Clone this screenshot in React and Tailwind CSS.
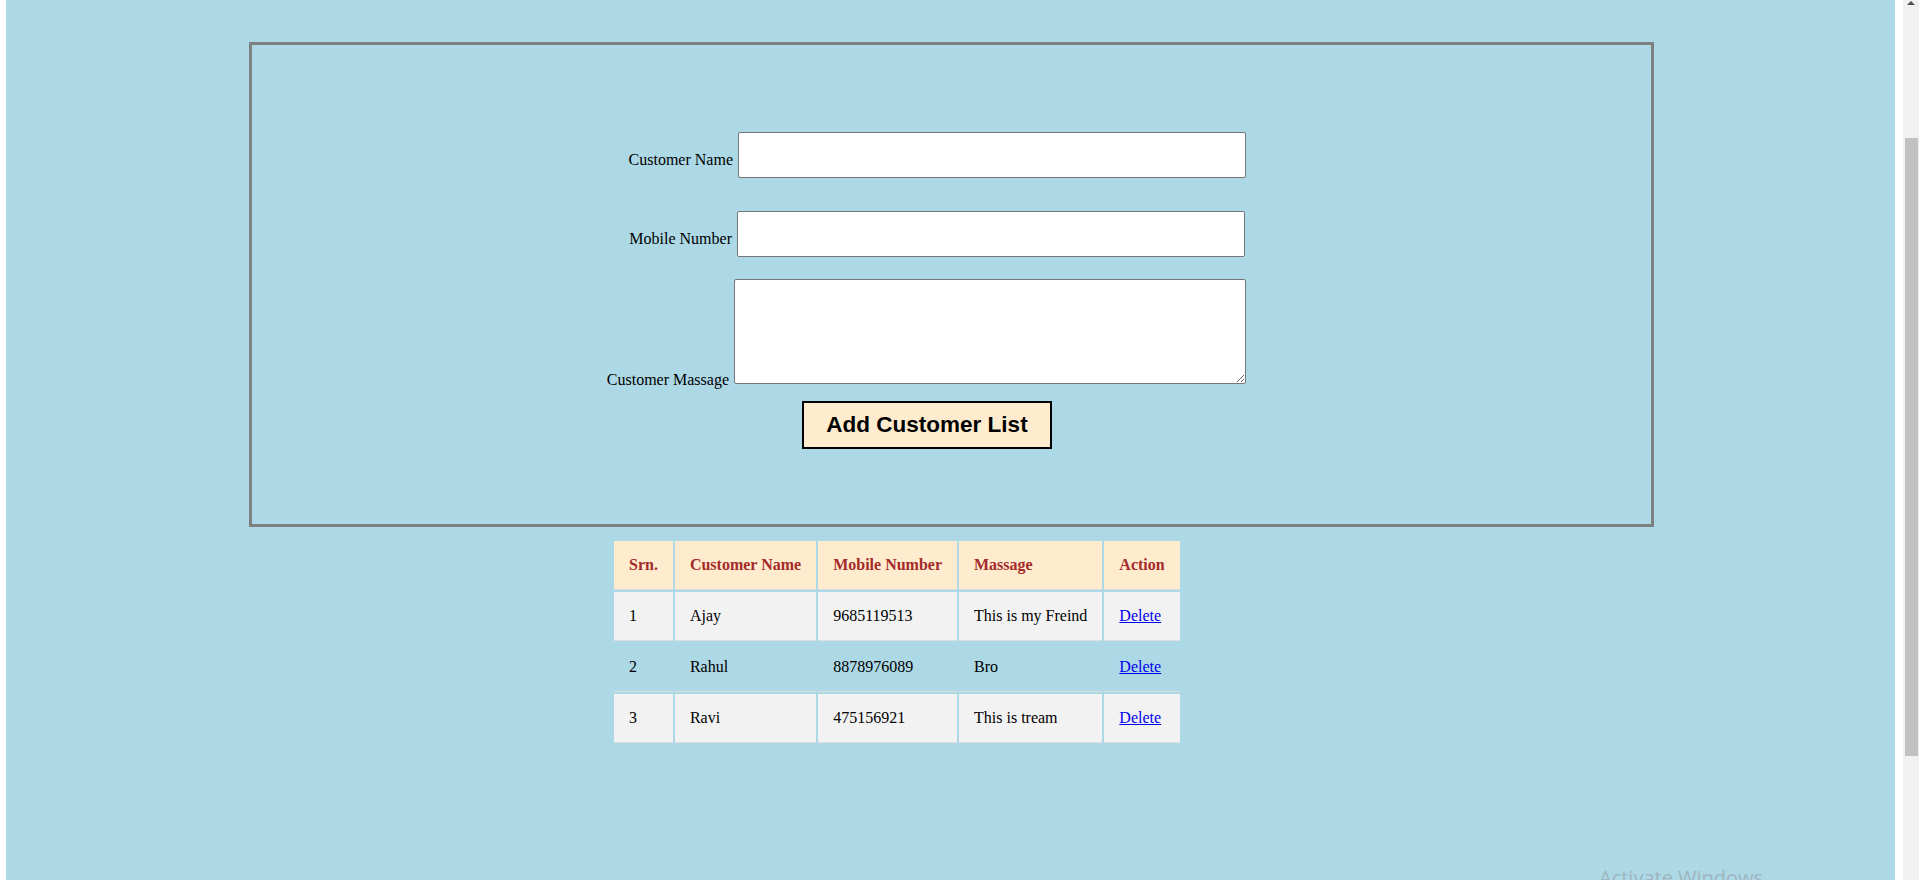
import React from 'react';

const customers = [
  { srn: 1, name: 'Ajay', mobile: '9685119513', massage: 'This is my Freind' },
  { srn: 2, name: 'Rahul', mobile: '8878976089', massage: 'Bro' },
  { srn: 3, name: 'Ravi', mobile: '475156921', massage: 'This is tream' },
];

const cell = 'px-[15px] py-[15px] leading-[18px] border-b border-[#dddddd] text-left whitespace-nowrap';

const App = () => {
  return (
    <div className="relative flex h-[880px] w-full overflow-hidden bg-white font-['Liberation_Serif','Times_New_Roman',serif] text-[16px] text-black">
      <div className="w-[6px] shrink-0 bg-white"></div>

      {/* Page */}
      <div className="w-[1889px] shrink-0 bg-[#add8e6]">
        {/* Form box */}
        <div className="ml-[243px] mt-[42px] h-[485px] w-[1405px] border-[3px] border-[#808080]">
          <div className="mt-[87px] flex items-end">
            <label className="mb-[9px] w-[481px] text-right leading-[18px]">Customer Name</label>
            <input type="text" className="ml-[5px] h-[46px] w-[508px] rounded-[2px] border border-[#767676] bg-white" />
          </div>

          <div className="mt-[33px] flex items-end">
            <label className="mb-[9px] w-[480px] text-right leading-[18px]">Mobile Number</label>
            <input type="text" className="ml-[5px] h-[46px] w-[508px] rounded-[2px] border border-[#767676] bg-white" />
          </div>

          <div className="mt-[22px] flex items-end">
            <label className="-mb-[5px] w-[477px] text-right leading-[18px]">Customer Massage</label>
            <textarea className="ml-[5px] h-[105px] w-[512px] rounded-[2px] border border-[#767676] bg-white"></textarea>
          </div>

          <button className="ml-[550px] mt-[17px] flex h-[48px] w-[250px] items-center justify-center border-2 border-black bg-[#ffebcd] font-['Liberation_Sans',Arial,sans-serif] text-[22.5px] font-bold leading-[24px] text-black">
            Add Customer List
          </button>
        </div>

        {/* Customer table */}
        <table className="ml-[606px] mt-[12px] border-separate border-spacing-[2px]">
          <thead>
            <tr className="bg-[#ffebcd] text-[#a52a2a]">
              <th className={`${cell} font-bold`}>Srn.</th>
              <th className={`${cell} font-bold`}>Customer Name</th>
              <th className={`${cell} font-bold`}>Mobile Number</th>
              <th className={`${cell} font-bold`}>Massage</th>
              <th className={`${cell} font-bold`}>Action</th>
            </tr>
          </thead>
          <tbody>
            {customers.map((c, i) => (
              <tr key={c.srn} className={i % 2 === 0 ? 'bg-[#f2f2f2]' : ''}>
                <td className={cell}>{c.srn}</td>
                <td className={cell}>{c.name}</td>
                <td className={cell}>{c.mobile}</td>
                <td className={cell}>{c.massage}</td>
                <td className={cell}>
                  <a href="#" className="text-[#0000ee] underline">Delete</a>
                </td>
              </tr>
            ))}
          </tbody>
        </table>
      </div>

      <div className="w-[8px] shrink-0 bg-white"></div>

      {/* Scrollbar */}
      <div className="relative w-[16px] shrink-0 bg-[#f1f1f1]">
        <svg className="absolute left-[4px] top-[1px]" width="8" height="5" viewBox="0 0 8 5">
          <path d="M4 0 L8 4 L0 4 Z" fill="#505050" />
        </svg>
        <div className="absolute left-[2px] top-[138px] h-[618px] w-[13px] bg-[#c1c1c1]"></div>
      </div>

      {/* Windows watermark */}
      <div className="absolute left-[1599px] top-[868px] font-['Open_Sans','Noto_Sans',sans-serif] text-[20px] leading-[20px] text-[#9fb6be]">
        Activate Windows
      </div>
    </div>
  );
};

export default App;
